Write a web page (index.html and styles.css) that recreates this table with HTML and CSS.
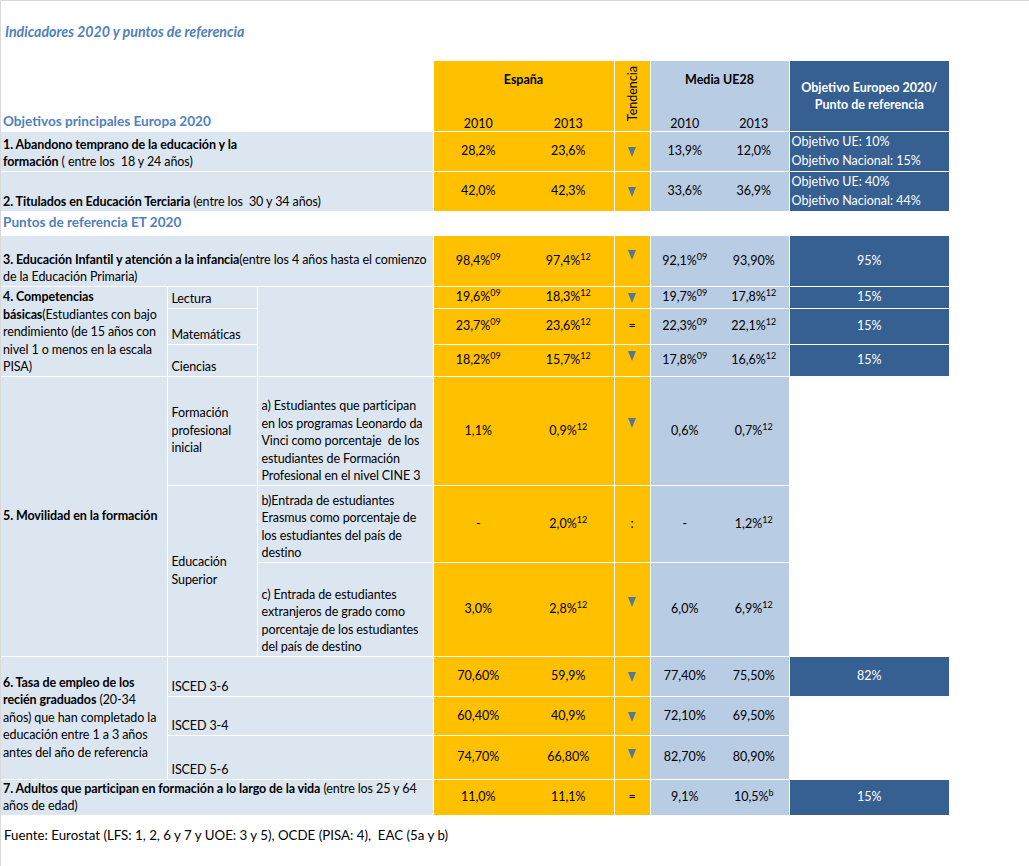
FILE: index.html
```html
<!DOCTYPE html>
<html lang="es">
<head>
<meta charset="utf-8">
<title>Indicadores 2020 y puntos de referencia</title>
<link rel="stylesheet" href="styles.css">
</head>
<body>
<div class="page">
  <h1 class="title">Indicadores 2020 y puntos de referencia</h1>
  <table class="grid">
    <colgroup>
      <col class="c-a"><col class="c-b"><col class="c-c"><col class="c-d"><col class="c-e"><col class="c-f"><col class="c-g"><col class="c-h"><col class="c-i">
    </colgroup>
    <tr class="h1">
      <td colspan="3" rowspan="2" class="sect">Objetivos principales Europa 2020</td>
      <td colspan="2" class="es hd-top">España</td>
      <td rowspan="2" class="es tend-h"><span class="vert">Tendencia</span></td>
      <td colspan="2" class="ue hd-top">Media UE28</td>
      <td rowspan="2" class="obj obj-h">Objetivo Europeo 2020/<br>Punto de referencia</td>
    </tr>
    <tr class="h2">
      <td class="es yr y10">2010</td><td class="es yr">2013</td>
      <td class="ue yr y10">2010</td><td class="ue yr">2013</td>
    </tr>
    <tr class="r1">
      <td colspan="3" class="lbl"><b>1. Abandono temprano de la educación y la<br>formación</b> ( entre los&nbsp; 18 y 24 años)</td>
      <td class="es num y10">28,2%</td><td class="es num">23,6%</td>
      <td class="es trend"><svg class="tri" viewBox="0 0 8 10"><path d="M0 0H8L4 10Z"/></svg></td>
      <td class="ue num y10">13,9%</td><td class="ue num">12,0%</td>
      <td class="obj obj-l">Objetivo UE: 10%<br>Objetivo Nacional: 15%</td>
    </tr>
    <tr class="r2">
      <td colspan="3" class="lbl"><b>2. Titulados en Educación Terciaria</b> (entre los&nbsp; 30 y 34 años)</td>
      <td class="es num y10">42,0%</td><td class="es num">42,3%</td>
      <td class="es trend"><svg class="tri" viewBox="0 0 8 10"><path d="M0 0H8L4 10Z"/></svg></td>
      <td class="ue num y10">33,6%</td><td class="ue num">36,9%</td>
      <td class="obj obj-l">Objetivo UE: 40%<br>Objetivo Nacional: 44%</td>
    </tr>
    <tr class="sec">
      <td colspan="9" class="sect">Puntos de referencia ET 2020</td>
    </tr>
    <tr class="r3">
      <td colspan="3" class="lbl"><b>3. Educación Infantil y atención a la infancia</b>(entre los 4 años hasta el comienzo<br>de la Educación Primaria)</td>
      <td class="es num y10">98,4%<sup>09</sup></td><td class="es num">97,4%<sup>12</sup></td>
      <td class="es trend"><svg class="tri up6" viewBox="0 0 8 10"><path d="M0 0H8L4 10Z"/></svg></td>
      <td class="ue num y10">92,1%<sup>09</sup></td><td class="ue num">93,90%</td>
      <td class="obj num">95%</td>
    </tr>
    <tr class="r4a">
      <td rowspan="3" class="lbl"><b>4. Competencias<br>básicas</b>(Estudiantes con bajo<br>rendimiento (de 15 años con<br>nivel 1 o menos en la escala<br>PISA)</td>
      <td class="lbl sub">Lectura</td>
      <td rowspan="3" class="lbl"></td>
      <td class="es num y10">19,6%<sup>09</sup></td><td class="es num">18,3%<sup>12</sup></td>
      <td class="es trend"><svg class="tri" viewBox="0 0 8 10"><path d="M0 0H8L4 10Z"/></svg></td>
      <td class="ue num y10">19,7%<sup>09</sup></td><td class="ue num">17,8%<sup>12</sup></td>
      <td class="obj num">15%</td>
    </tr>
    <tr class="r4b">
      <td class="lbl sub">Matemáticas</td>
      <td class="es num y10">23,7%<sup>09</sup></td><td class="es num">23,6%<sup>12</sup></td>
      <td class="es trend">=</td>
      <td class="ue num y10">22,3%<sup>09</sup></td><td class="ue num">22,1%<sup>12</sup></td>
      <td class="obj num">15%</td>
    </tr>
    <tr class="r4c">
      <td class="lbl sub">Ciencias</td>
      <td class="es num y10">18,2%<sup>09</sup></td><td class="es num">15,7%<sup>12</sup></td>
      <td class="es trend"><svg class="tri up4" viewBox="0 0 8 10"><path d="M0 0H8L4 10Z"/></svg></td>
      <td class="ue num y10">17,8%<sup>09</sup></td><td class="ue num">16,6%<sup>12</sup></td>
      <td class="obj num">15%</td>
    </tr>
    <tr class="r5a">
      <td rowspan="3" class="lbl mid"><b>5. Movilidad en la formación</b></td>
      <td class="lbl sub mid">Formación<br>profesional<br>inicial</td>
      <td class="lbl sub">a) Estudiantes que participan<br>en los programas Leonardo da<br>Vinci como porcentaje&nbsp; de los<br>estudiantes de Formación<br>Profesional en el nivel CINE 3</td>
      <td class="es num y10">1,1%</td><td class="es num">0,9%<sup>12</sup></td>
      <td class="es trend"><svg class="tri up10" viewBox="0 0 8 10"><path d="M0 0H8L4 10Z"/></svg></td>
      <td class="ue num y10">0,6%</td><td class="ue num">0,7%<sup>12</sup></td>
      <td class="blank"></td>
    </tr>
    <tr class="r5b">
      <td rowspan="2" class="lbl sub mid">Educación<br>Superior</td>
      <td class="lbl sub">b)Entrada de estudiantes<br>Erasmus como porcentaje de<br>los estudiantes del país de<br>destino</td>
      <td class="es num y10">-</td><td class="es num">2,0%<sup>12</sup></td>
      <td class="es trend">:</td>
      <td class="ue num y10">-</td><td class="ue num">1,2%<sup>12</sup></td>
      <td class="blank"></td>
    </tr>
    <tr class="r5c">
      <td class="lbl sub">c) Entrada de estudiantes<br>extranjeros de grado como<br>porcentaje de los estudiantes<br>del país de destino</td>
      <td class="es num y10">3,0%</td><td class="es num">2,8%<sup>12</sup></td>
      <td class="es trend"><svg class="tri up10" viewBox="0 0 8 10"><path d="M0 0H8L4 10Z"/></svg></td>
      <td class="ue num y10">6,0%</td><td class="ue num">6,9%<sup>12</sup></td>
      <td class="blank"></td>
    </tr>
    <tr class="r6a">
      <td rowspan="3" class="lbl mid"><b>6. Tasa de empleo de los<br>recién graduados</b> (20-34<br>años) que han completado la<br>educación entre 1 a 3 años<br>antes del año de referencia</td>
      <td colspan="2" class="lbl sub">ISCED 3-6</td>
      <td class="es num y10">70,60%</td><td class="es num">59,9%</td>
      <td class="es trend"><svg class="tri" viewBox="0 0 8 10"><path d="M0 0H8L4 10Z"/></svg></td>
      <td class="ue num y10">77,40%</td><td class="ue num">75,50%</td>
      <td class="obj num">82%</td>
    </tr>
    <tr class="r6b">
      <td colspan="2" class="lbl sub">ISCED 3-4</td>
      <td class="es num y10">60,40%</td><td class="es num">40,9%</td>
      <td class="es trend"><svg class="tri" viewBox="0 0 8 10"><path d="M0 0H8L4 10Z"/></svg></td>
      <td class="ue num y10">72,10%</td><td class="ue num">69,50%</td>
      <td class="blank"></td>
    </tr>
    <tr class="r6c">
      <td colspan="2" class="lbl sub">ISCED 5-6</td>
      <td class="es num y10">74,70%</td><td class="es num">66,80%</td>
      <td class="es trend"><svg class="tri up2" viewBox="0 0 8 10"><path d="M0 0H8L4 10Z"/></svg></td>
      <td class="ue num y10">82,70%</td><td class="ue num">80,90%</td>
      <td class="blank"></td>
    </tr>
    <tr class="r7">
      <td colspan="3" class="lbl"><b>7. Adultos que participan en formación a lo largo de la vida</b> (entre los 25 y 64<br>años de edad)</td>
      <td class="es num y10">11,0%</td><td class="es num">11,1%</td>
      <td class="es trend">=</td>
      <td class="ue num y10">9,1%</td><td class="ue num">10,5%<sup>b</sup></td>
      <td class="obj num">15%</td>
    </tr>
  </table>
  <p class="src">Fuente: Eurostat (LFS: 1, 2, 6 y 7 y UOE: 3 y 5), OCDE (PISA: 4),&nbsp; EAC (5a y b)</p>
</div>
</body>
</html>
```

FILE: styles.css
```css
* { box-sizing: border-box; }
html, body { margin: 0; padding: 0; background: #fff; }
body {
  font-family: Lato, "Liberation Sans", sans-serif;
  font-size: 12.5px;
  color: #000;
}
.page {
  width: 1029px;
  height: 866px;
  border-top: 1px solid #d9d9d9;
  border-left: 1px solid #d9d9d9;
  overflow: hidden;
}
.title {
  margin: 0;
  height: 60px;
  padding: 22px 0 0 4px;
  font-size: 14.2px;
  line-height: 17px;
  font-weight: bold;
  font-style: italic;
  color: #4f81bd;
}
.grid {
  border-collapse: collapse;
  border-style: hidden;
  table-layout: fixed;
  width: 948px;
}
.c-a { width: 166px; }
.c-b { width: 90px; }
.c-c { width: 176px; }
.c-d { width: 90px; }
.c-e { width: 91px; }
.c-f { width: 36px; }
.c-g { width: 69px; }
.c-h { width: 70px; }
.c-i { width: 160px; }

.grid td {
  border: 1px solid #fff;
  padding: 0 2px;
  line-height: 17.5px;
  vertical-align: bottom;
  white-space: nowrap;
}
.grid b { font-weight: bold; }

.h1 { height: 44px; }
.h2 { height: 26px; }
.r1, .r2 { height: 40px; }
.sec { height: 24px; }
.r3 { height: 51px; }
.r4a { height: 22px; }
.r4b { height: 36px; }
.r4c { height: 32px; }
.r5a { height: 109px; }
.r5b { height: 77px; }
.r5c { height: 94px; }
.r6a { height: 40px; }
.r6b { height: 39px; }
.r6c { height: 44px; }
.r7 { height: 33px; }

.sect {
  background: #fff;
  color: #4f81bd;
  font-weight: bold;
  font-size: 13.6px;
  padding-left: 3px;
}
.grid .sec .sect { vertical-align: middle; }

.es { background: #ffc000; }
.ue { background: #b8cce4; }
.obj { background: #366092; color: #fff; }
.blank { background: #fff; }
.lbl { background: #dce6f1; padding-left: 3px; letter-spacing: -0.1px; }
.grid .sub { padding-left: 4px; }
.grid .mid { vertical-align: middle; }

.grid .hd-top {
  border-bottom: hidden;
  vertical-align: top;
  padding-top: 10px;
  text-align: center;
  font-weight: bold;
}
.grid .yr { text-align: center; padding-bottom: 0; line-height: 14px; }
.grid .y10 { border-right: hidden; }

.grid .tend-h { vertical-align: top; text-align: center; padding-top: 5px; }
.vert {
  display: inline-block;
  writing-mode: vertical-rl;
  transform: rotate(180deg);
  line-height: 17px;
}
.grid .obj-h {
  vertical-align: middle;
  text-align: center;
  font-weight: bold;
  line-height: 17px;
}
.grid .obj-l {
  vertical-align: middle;
  line-height: 19.5px;
  padding-left: 2px;
}

.grid .num { text-align: center; vertical-align: middle; }
.grid .trend { text-align: center; vertical-align: middle; }
.tri {
  display: inline-block;
  width: 8px;
  height: 10px;
  fill: #53789c;
  vertical-align: middle;
}
.tri.up2 { vertical-align: 2px; }
.tri.up4 { vertical-align: 4px; }
.tri.up6 { vertical-align: 6px; }
.tri.up10 { vertical-align: 10px; }

sup {
  font-size: 9px;
  line-height: 0;
  vertical-align: 5px;
}

.src {
  margin: 12px 0 0 3px;
  font-size: 13.3px;
  line-height: 17px;
}
```
